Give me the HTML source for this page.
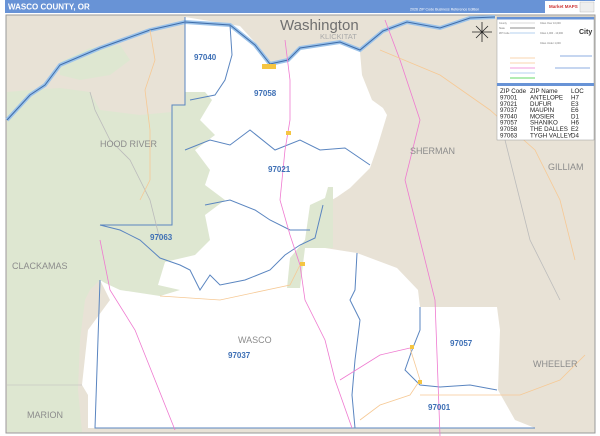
<!DOCTYPE html>
<html><head><meta charset="utf-8"><style>
html,body{margin:0;padding:0;background:#fff;width:600px;height:436px;overflow:hidden}
svg{display:block;font-family:"Liberation Sans",Arial,sans-serif}
</style></head><body>
<svg width="600" height="436" viewBox="0 0 600 436" xmlns="http://www.w3.org/2000/svg">
<rect x="0" y="0" width="600" height="436" fill="#fff"/>
<rect x="5" y="0" width="590" height="13" fill="#6893d6"/>
<text x="8" y="9.5" font-size="8" font-weight="bold" fill="#fff">WASCO COUNTY, OR</text>
<text x="410" y="10.5" font-size="3.6" fill="#fff">2026 ZIP Code Business Reference Edition</text>
<rect x="545" y="1" width="50" height="12" fill="#fff"/>
<text x="549" y="8" font-size="4.5" font-weight="bold" fill="#c33">Market MAPS</text>
<rect x="580" y="2" width="14" height="10" fill="#eee" stroke="#999" stroke-width="0.3"/>
<rect x="6" y="15" width="589" height="418" fill="#e8e2d6" stroke="#999" stroke-width="1"/>
<!-- green forests west -->
<path d="M7,92 L30,90 L60,88 L90,92 L100,110 L140,115 L172,112 L172,225 L100,225 L100,280 L90,290 L85,300 L80,340 L78,390 L82,432 L7,432 Z" fill="#dee7d1"/>
<path d="M60,62 L90,48 L120,45 L130,60 L110,75 L80,80 L60,75 Z" fill="#dee7d1"/>
<path d="M7,385 L85,385" stroke="#bbb" stroke-width="0.6"/>
<!-- white wasco -->
<path d="M185,17 L240,26 L260,48 L270,65 L287,62 L300,47 L340,43 L360,52 L362,75 L372,100 L383,108 L387,115 L377,148 L370,168 L350,188 L337,197 L323,205 L325,248 L357,253 L397,268 L418,290 L420,307 L497,307 L500,330 L498,390 L515,420 L535,428 L88,428 L88,395 L82,385 L88,330 L110,300 L100,280 L100,225 L172,225 L172,105 L185,105 Z" fill="#fff"/>
<path d="M172,105 L185,105 L185,92 L205,92 L212,100 L200,120 L215,135 L195,150 L210,170 L205,185 L225,200 L205,215 L210,240 L195,255 L165,262 L158,285 L180,290 L160,296 L120,290 L105,283 L100,280 L100,225 L172,225 Z" fill="#dee7d1"/>
<path d="M328,187 L333,187 L333,248 L305,248 L300,288 L287,288 L290,258 L305,240 L310,205 L325,198 Z" fill="#dee7d1"/>
<!-- river -->
<path d="M7,120 L30,95 L45,85 L60,65 L100,48 L150,30 L185,22 L230,25 L255,45 L270,64 L288,60 L300,48 L340,42 L360,50 L383,31 L407,22 L440,28 L470,18 L495,17" fill="none" stroke="#9cc3ea" stroke-width="4"/>
<path d="M7,120 L30,95 L45,85 L60,65 L100,48 L150,30 L185,22 L230,25 L255,45 L270,64 L288,60 L300,48 L340,42 L360,50 L383,31 L407,22 L440,28 L470,18 L495,17" fill="none" stroke="#3f6ca8" stroke-width="1"/>
<g fill="none" stroke="#5a85c0" stroke-width="1">
<path d="M185,17 L185,105 L172,105 L172,225 L100,225"/>
<path d="M230,25 L232,55 L225,80 L215,95 L190,100"/>
<path d="M185,150 L210,140 L230,145 L250,130 L275,150 L300,140 L320,150 L345,148 L370,165"/>
<path d="M100,225 L120,230 L140,240 L160,258 L180,265 L190,270 L200,290 L210,275 L220,285 L245,280 L270,270 L285,255 L300,245 L315,238 L323,205"/>
<path d="M205,205 L230,200 L255,210 L270,220 L290,230 L310,230"/>
<path d="M357,253 L355,290 L350,300 L360,320 L355,360 L352,395 L355,428"/>
<path d="M420,307 L420,330 L412,350 L405,370 L420,385 L440,387 L470,385 L497,390"/>
<path d="M100,280 L95,428 L535,428"/>
</g>
<g fill="none" stroke-width="0.8">
<path d="M285,40 L290,80 L290,120 L285,150 L280,200 L290,235 L300,265 L305,300 L325,340 L335,380 L352,428" stroke="#ef7ad0"/>
<path d="M100,240 L110,290 L135,330 L155,380 L175,430" stroke="#ef7ad0"/>
<path d="M385,20 L400,60 L420,120 L405,180 L420,240 L435,300 L440,436" stroke="#ef7ad0"/>
<path d="M340,380 L380,355 L410,348" stroke="#ef7ad0"/>
<path d="M160,296 L220,300 L290,285 L300,265" stroke="#f6c995"/>
<path d="M410,348 L420,380 L410,395 L380,405 L360,420" stroke="#f6c995"/>
<path d="M420,395 L470,395 L520,395 L560,380 L585,355" stroke="#f6c995"/>
<path d="M380,50 L440,75 L490,110 L535,150 L560,200 L575,260" stroke="#f6c995"/>
<path d="M505,140 L520,200 L530,240 L545,270 L560,300" stroke="#bbb"/>
<path d="M90,92 L95,110 L110,140 L130,160 L150,200 L160,240" stroke="#bbb"/>
<path d="M150,30 L155,60 L145,90 L150,130 L150,180 L140,200" stroke="#f6c995"/>
</g>
<rect x="262" y="64" width="14" height="5" fill="#f5c542"/>
<rect x="286" y="131" width="5" height="4" fill="#f5c542"/>
<rect x="300" y="262" width="5" height="4" fill="#f5c542"/>
<rect x="410" y="345" width="4" height="4" fill="#f5c542"/>
<rect x="418" y="380" width="4" height="4" fill="#f5c542"/>
<text x="280" y="30" font-size="15" fill="#707070">Washington</text>
<text x="320" y="39" font-size="7.5" fill="#aaa">KLICKITAT</text>
<text x="100" y="147" font-size="9" fill="#8c8c8c">HOOD RIVER</text>
<text x="410" y="154" font-size="9" fill="#8c8c8c">SHERMAN</text>
<text x="548" y="170" font-size="9" fill="#8c8c8c">GILLIAM</text>
<text x="12" y="269" font-size="9" fill="#8c8c8c">CLACKAMAS</text>
<text x="27" y="418" font-size="9" fill="#8c8c8c">MARION</text>
<text x="533" y="367" font-size="9" fill="#8c8c8c">WHEELER</text>
<text x="238" y="343" font-size="9" fill="#8c8c8c">WASCO</text>
<g font-size="8" font-weight="bold" fill="#3d6fb5">
<text x="194" y="60">97040</text>
<text x="254" y="96">97058</text>
<text x="268" y="172">97021</text>
<text x="150" y="240">97063</text>
<text x="228" y="358">97037</text>
<text x="450" y="346">97057</text>
<text x="428" y="410">97001</text>
</g>
<g stroke="#222" stroke-width="0.8"><line x1="482" y1="22" x2="482" y2="42"/><line x1="472" y1="32" x2="492" y2="32"/><line x1="476" y1="26" x2="488" y2="38"/><line x1="488" y1="26" x2="476" y2="38"/></g>
<rect x="497" y="17" width="97" height="123" fill="#fff" stroke="#999" stroke-width="0.5"/>
<rect x="497" y="17" width="97" height="2.5" fill="#6893d6"/>
<g stroke-width="0.8" fill="none">
<line x1="510" y1="23" x2="535" y2="23" stroke="#ccc"/>
<line x1="510" y1="28" x2="535" y2="28" stroke="#666"/>
<line x1="510" y1="33" x2="535" y2="33" stroke="#9cc3ea"/>
<line x1="510" y1="58" x2="535" y2="58" stroke="#f6c995"/>
<line x1="510" y1="63" x2="535" y2="63" stroke="#f6c995"/>
<line x1="510" y1="68" x2="535" y2="68" stroke="#ef7ad0"/>
<line x1="510" y1="73" x2="535" y2="73" stroke="#9cc3ea"/>
<line x1="510" y1="78" x2="535" y2="78" stroke="#3c3"/>
<line x1="560" y1="56" x2="592" y2="56" stroke="#6893d6"/>
<line x1="555" y1="68" x2="590" y2="68" stroke="#6893d6"/>
</g>
<g font-size="2.5" fill="#777"><text x="499" y="24">County</text><text x="499" y="29">State</text><text x="499" y="34">ZIP Code</text><text x="540" y="24">Cities Over 10,000</text><text x="540" y="34">Cities 1,000 - 10,000</text><text x="540" y="44">Cities Under 1,000</text></g>
<text x="579" y="34" font-size="7" font-weight="bold" fill="#333">City</text>
<rect x="497" y="83" width="97" height="3" fill="#6893d6"/>
<g font-size="6.2" fill="#222">
<text x="500" y="93">ZIP Code</text><text x="530" y="93">ZIP Name</text><text x="571" y="93">LOC</text>
<text x="500" y="99.5">97001</text><text x="530" y="99.5">ANTELOPE</text><text x="571" y="99.5">H7</text>
<text x="500" y="105.8">97021</text><text x="530" y="105.8">DUFUR</text><text x="571" y="105.8">E3</text>
<text x="500" y="112.1">97037</text><text x="530" y="112.1">MAUPIN</text><text x="571" y="112.1">E6</text>
<text x="500" y="118.4">97040</text><text x="530" y="118.4">MOSIER</text><text x="571" y="118.4">D1</text>
<text x="500" y="124.7">97057</text><text x="530" y="124.7">SHANIKO</text><text x="571" y="124.7">H6</text>
<text x="500" y="131">97058</text><text x="530" y="131">THE DALLES</text><text x="571" y="131">E2</text>
<text x="500" y="137.3">97063</text><text x="530" y="137.3">TYGH VALLEY</text><text x="571" y="137.3">D4</text>
</g>
</svg>
</body></html>
